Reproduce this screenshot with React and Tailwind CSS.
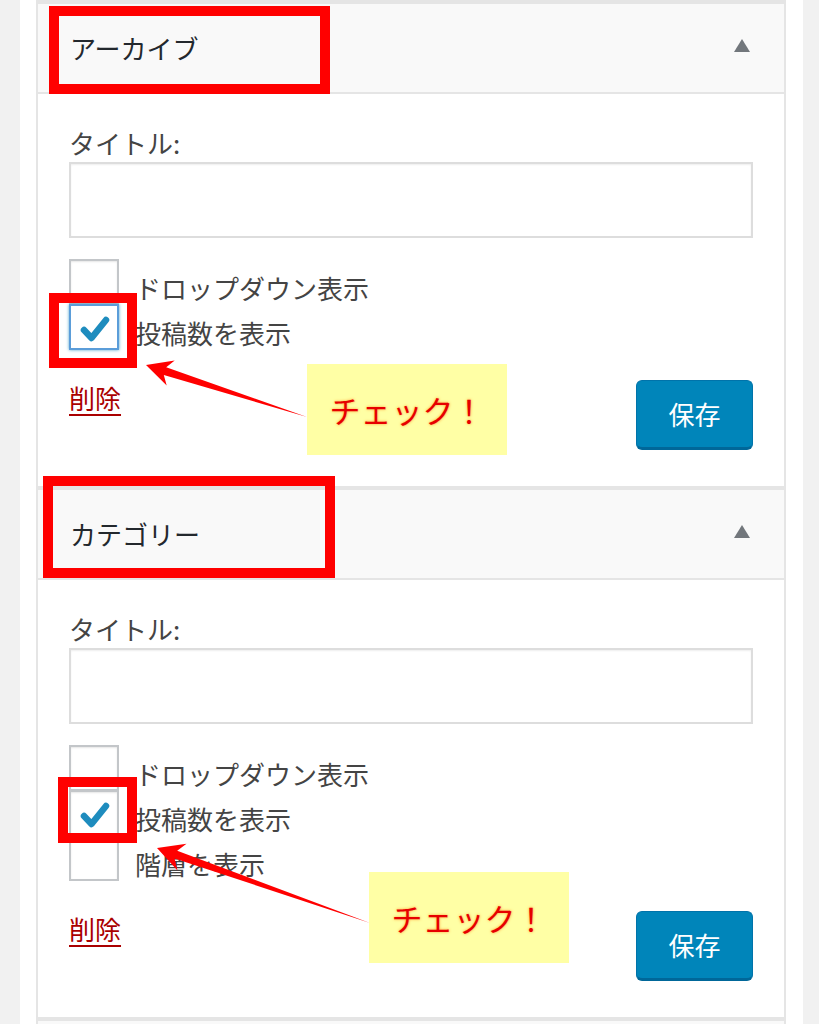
import React from 'react';

const CheckMark = () => (
  <svg width="32" height="28" viewBox="0 0 32 28" className="absolute left-[8px] top-[9px]">
    <path d="M5 15 L12.5 23 L27 5" fill="none" stroke="#1e8cbe" strokeWidth="6.5" strokeLinecap="round" strokeLinejoin="round" />
  </svg>
);

const Widget = ({ title, options, focused }) => (
  <div className="border-2 border-[#e5e5e5]">
    {/* Header */}
    <div className="h-[90px] bg-[#f9f9f9] border-b-2 border-[#e5e5e5] flex items-center justify-between pl-[32px] pr-[34px]">
      <h3 className="text-[26px] leading-none text-[#23282d]">{title}</h3>
      <svg width="16" height="13" viewBox="0 0 16 13" className="-mt-[6px]">
        <polygon points="8,0 16,13 0,13" fill="#72777c" />
      </svg>
    </div>
    {/* Body */}
    <div className="px-[31px] pt-[31px] pb-[36px] bg-white">
      <label className="block text-[26px] leading-[36px] text-[#444]">タイトル:</label>
      <div className="mt-px h-[76px] border-2 border-[#dddddd] bg-white shadow-[inset_0_1px_2px_rgba(0,0,0,0.07)]" />
      <div className="mt-[21px] flex flex-col">
        {options.map((o) => (
          <div key={o.label} className="flex h-[45px]">
            <div
              className={
                o.checked && focused
                  ? 'relative shrink-0 w-[50px] h-[46px] border-2 border-[#5b9dd9] bg-white shadow-[0_0_3px_rgba(30,140,190,0.8)]'
                  : 'relative shrink-0 w-[50px] h-[46px] border-2 border-[#c3c6c9] bg-white shadow-[inset_0_1px_2px_rgba(0,0,0,0.1)]'
              }
            >
              {o.checked && <CheckMark />}
            </div>
            <span className="ml-[16px] pt-[11px] text-[26px] leading-[36px] text-[#444] whitespace-nowrap">{o.label}</span>
          </div>
        ))}
      </div>
      <div className="mt-[31px] flex items-start justify-between">
        <a className="text-[26px] leading-[36px] text-[#aa0000] underline underline-offset-[5px]">削除</a>
        <button className="w-[117px] h-[70px] rounded-[6px] bg-[#0085ba] border border-[#0073aa] border-b-[3px] border-b-[#006799] text-white text-[26px] leading-none">
          保存
        </button>
      </div>
    </div>
  </div>
);

const Note = ({ className }) => (
  <div className={`absolute w-[200px] h-[91px] bg-[#ffffa5] flex items-center justify-center ${className}`}>
    <span className="text-[31px] leading-none text-[#e60000] [text-shadow:0_0_3px_#ff9a30]">チェック！</span>
  </div>
);

export default function App() {
  return (
    <div className="relative w-[819px] h-[1024px] overflow-hidden bg-[#f1f1f1] font-['Noto_Sans_CJK_JP','Noto_Sans',sans-serif]">
      <div className="ml-[20px] w-[783px] h-full bg-white pl-[16px] pr-[17px]">
        <div className="h-[2px] bg-[#e5e5e5]" />
        <Widget
          title="アーカイブ"
          focused
          options={[
            { label: 'ドロップダウン表示', checked: false },
            { label: '投稿数を表示', checked: true },
          ]}
        />
        <Widget
          title="カテゴリー"
          options={[
            { label: 'ドロップダウン表示', checked: false },
            { label: '投稿数を表示', checked: true },
            { label: '階層を表示', checked: false },
          ]}
        />
        <div className="h-[40px] border-2 border-b-0 border-[#e5e5e5] bg-[#f9f9f9]" />
      </div>

      {/* annotations */}
      <div className="absolute left-[49px] top-[6px] w-[281px] h-[88px] border-[10px] border-[#ff0000]" />
      <div className="absolute left-[49px] top-[293px] w-[88px] h-[75px] border-[10px] border-[#ff0000]" />
      <div className="absolute left-[43px] top-[476px] w-[292px] h-[102px] border-[10px] border-[#ff0000]" />
      <div className="absolute left-[58px] top-[777px] w-[79px] h-[66px] border-[10px] border-[#ff0000]" />

      <Note className="left-[307px] top-[364px]" />
      <Note className="left-[369px] top-[872px]" />

      <svg className="absolute inset-0 pointer-events-none" width="819" height="1024" viewBox="0 0 819 1024">
        <polygon
          points="146,365 174.7,360.6 166.2,367.3 307,417 163.8,374.9 166.7,385.4"
          fill="#ff0000"
        />
        <polygon
          points="157,848 186.5,843.8 177.2,850.8 370,923 174.6,858.4 177.5,870.5"
          fill="#ff0000"
        />
      </svg>
    </div>
  );
}
